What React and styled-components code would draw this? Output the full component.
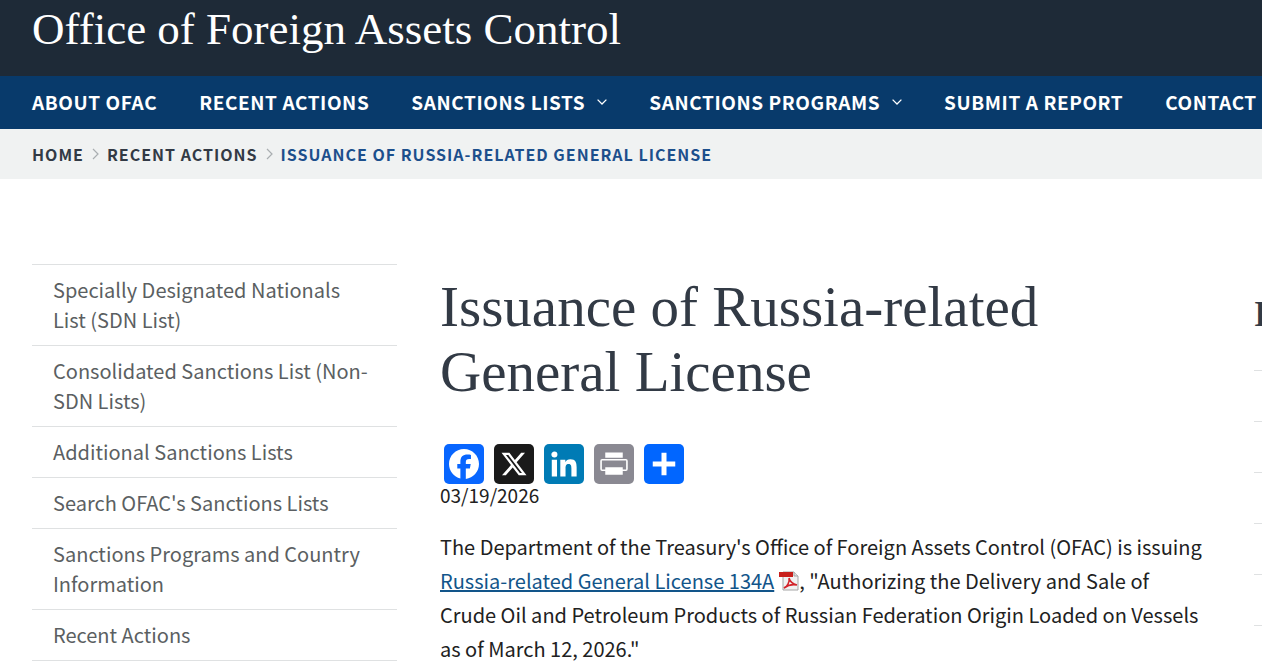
import React from 'react';
import styled, { createGlobalStyle } from 'styled-components';

const sans = '"Noto Sans CJK SC", "Open Sans", sans-serif';
const serif = '"Liberation Serif", "Times New Roman", serif';

const GlobalStyle = createGlobalStyle`
  *,
  *::before,
  *::after {
    box-sizing: border-box;
  }

  body {
    margin: 0;
    background: #fff;
    color: #212121;
    font-family: ${sans};
    font-size: 20px;
    overflow: hidden;
  }

  a {
    color: inherit;
    text-decoration: none;
  }

  ul,
  ol {
    margin: 0;
    padding: 0;
    list-style: none;
  }
`;

const Header = styled.header`
  height: 76px;
  padding: 4px 32px 0;
  background: #1e2a37;
  color: #fff;
`;

const SiteName = styled.a`
  display: block;
  font-family: ${serif};
  font-size: 45px;
  line-height: 50px;
`;

const Nav = styled.nav`
  background: #083a6b;
  color: #fff;
  overflow: hidden;
`;

const NavList = styled.ul`
  display: flex;
  gap: 42px;
  padding: 0 32px;
`;

const NavLink = styled.a`
  display: flex;
  align-items: center;
  gap: 12px;
  height: 53px;
  padding-bottom: 2px;
  font-size: 19px;
  font-weight: 700;
  letter-spacing: 0.03em;
  text-transform: uppercase;
  white-space: nowrap;
`;

const Crumbs = styled.ol`
  display: flex;
  align-items: center;
  gap: 8px;
  height: 50px;
  padding: 0 32px;
  background: #f0f2f2;
`;

const Crumb = styled.li`
  display: flex;
  align-items: center;
  gap: 8px;
  color: ${({ $current }) => ($current ? '#1c4f8c' : '#323a45')};
  font-size: 16px;
  font-weight: 700;
  letter-spacing: 1px;
  line-height: 24px;
  text-transform: uppercase;
  white-space: nowrap;
`;

const Main = styled.main`
  display: grid;
  grid-template-columns: 365px minmax(0, 1fr) 8px;
  gap: 43px;
  align-items: start;
  padding: 85px 0 0 32px;
`;

const SideList = styled.ul`
  border-top: 1px solid #dfe1e2;
`;

const SideItem = styled.li`
  border-bottom: 1px solid #dfe1e2;
`;

const SideLink = styled.a`
  display: block;
  padding: 10px 21px;
  color: #5b5f62;
  line-height: 30px;
`;

const Article = styled.article`
  padding: 10px 4px 0 0;
`;

const Title = styled.h1`
  margin: 0;
  color: #323a45;
  font-family: ${serif};
  font-size: 57px;
  font-weight: 400;
  line-height: 65px;
`;

const Share = styled.div`
  display: flex;
  gap: 10px;
  padding: 40px 4px 0;
`;

const ShareLink = styled.a`
  display: block;
  width: 40px;
  height: 40px;
  border-radius: 5px;
  background: ${({ $color }) => $color};

  svg {
    display: block;
    width: 100%;
    height: 100%;
  }
`;

const PostDate = styled.time`
  display: block;
  font-size: 19px;
  line-height: 22px;
`;

const Body = styled.p`
  margin: 24px 0 0;
  line-height: 34px;
`;

const DocLink = styled.a`
  color: #12558a;
  text-decoration: underline;
`;

const PdfIcon = styled.svg`
  width: 20px;
  height: 20px;
  margin-left: 5px;
  vertical-align: -2px;
`;

const Related = styled.aside`
  padding-top: 30px;
  overflow: hidden;
`;

const RelatedTitle = styled.h2`
  margin: 0;
  color: #323a45;
  font-family: ${serif};
  font-size: 35px;
  line-height: 42px;
`;

const RelatedRule = styled.li`
  height: 51px;
  border-top: 1px solid #dfe1e2;

  &:first-child {
    margin-top: 34px;
  }
`;

const navItems = [
  { label: 'About OFAC' },
  { label: 'Recent Actions' },
  { label: 'Sanctions Lists', menu: true },
  { label: 'Sanctions Programs', menu: true },
  { label: 'Submit a Report' },
  { label: 'Contact' },
];

const sideItems = [
  'Specially Designated Nationals List (SDN List)',
  'Consolidated Sanctions List (Non-SDN Lists)',
  'Additional Sanctions Lists',
  "Search OFAC's Sanctions Lists",
  'Sanctions Programs and Country Information',
  'Recent Actions',
];

const shareItems = [
  {
    name: 'Facebook',
    color: '#0866ff',
    path: 'M28 16c0-6.627-5.373-12-12-12S4 9.373 4 16c0 5.628 3.875 10.35 9.101 11.647v-7.98h-2.474V16H13.1v-1.58c0-4.085 1.849-5.978 5.859-5.978.76 0 2.072.15 2.608.298v3.325c-.283-.03-.775-.045-1.386-.045-1.967 0-2.728.745-2.728 2.683V16h3.92l-.673 3.667h-3.247v8.245C23.395 27.195 28 22.135 28 16',
  },
  {
    name: 'X',
    color: '#1a1a1a',
    path: 'M21.751 7h3.067l-6.7 7.658L26 25.078h-6.172l-4.833-6.32-5.531 6.32h-3.07l7.167-8.19L6 7h6.328l4.37 5.777zm-1.076 16.242h1.7L11.404 8.74H9.58z',
  },
  {
    name: 'LinkedIn',
    color: '#007bb5',
    path: 'M6.227 12.61h4.19v13.48h-4.19zm2.095-6.7a2.43 2.43 0 0 1 0 4.86c-1.344 0-2.428-1.09-2.428-2.43s1.084-2.43 2.428-2.43m4.72 6.7h4.02v1.84h.058c.56-1.058 1.927-2.176 3.965-2.176 4.238 0 5.02 2.792 5.02 6.42v7.395h-4.183v-6.56c0-1.564-.03-3.574-2.178-3.574-2.18 0-2.514 1.7-2.514 3.46v6.668h-4.187z',
  },
  {
    name: 'Print',
    color: '#8a8992',
    path: 'M9 6.800h14V11H9zM6.500 12h19A1.500 1.500 0 0 1 27 13.500v6.500a1.500 1.500 0 0 1-1.500 1.500H23V24.600H9V21.500H6.500A1.500 1.500 0 0 1 5 20v-6.500A1.500 1.500 0 0 1 6.500 12zM6.300 13.200v7.100H9V18.600h14v1.700h2.700v-7.100z',
  },
  {
    name: 'Share',
    color: '#0166ff',
    path: 'M14 7h4v7h7v4h-7v7h-4v-7H7v-4h7z',
  },
];

const ChevronDown = () => (
  <svg width="10" height="6" viewBox="0 0 10 6" fill="none" stroke="#fff" strokeWidth="1.3" aria-hidden="true">
    <path d="M.6.6 5 5 9.400.6" />
  </svg>
);

const ChevronRight = () => (
  <svg width="7" height="12" viewBox="0 0 7 12" fill="none" stroke="#a9aeb1" strokeWidth="1.2" aria-hidden="true">
    <path d="M1 1l5 5-5 5" />
  </svg>
);

const Pdf = () => (
  <PdfIcon viewBox="0 0 20 20" aria-label="PDF" role="img">
    <path d="M4 1h11l4 4v14H4z" fill="#f1f1f1" stroke="#a5a5a5" />
    <path d="M15 1v4h4" fill="#ddd" stroke="#a5a5a5" />
    <path d="M0 1h14v5H0z" fill="#c8201c" />
    <path
      d="M5 17c3-1 6-6 5-10 1 4 4 6 8 7-5-1-9 0-13 3z"
      fill="none"
      stroke="#d2232a"
      strokeWidth="1.6"
    />
  </PdfIcon>
);

const App = () => (
  <>
    <GlobalStyle />
    <Header>
      <SiteName href="#home">Office of Foreign Assets Control</SiteName>
    </Header>

    <Nav aria-label="Main">
      <NavList>
        {navItems.map(({ label, menu }) => (
          <li key={label}>
            <NavLink href="#nav">
              {label}
              {menu && <ChevronDown />}
            </NavLink>
          </li>
        ))}
      </NavList>
    </Nav>

    <nav aria-label="Breadcrumb">
      <Crumbs>
        <Crumb>
          <a href="#home">Home</a>
          <ChevronRight />
        </Crumb>
        <Crumb>
          <a href="#recent">Recent Actions</a>
          <ChevronRight />
        </Crumb>
        <Crumb $current aria-current="page">
          Issuance of Russia-related General License
        </Crumb>
      </Crumbs>
    </nav>

    <Main>
      <nav aria-label="Section">
        <SideList>
          {sideItems.map((item) => (
            <SideItem key={item}>
              <SideLink href="#section">{item}</SideLink>
            </SideItem>
          ))}
        </SideList>
      </nav>

      <Article>
        <Title>Issuance of Russia-related General License</Title>
        <Share>
          {shareItems.map(({ name, color, path }) => (
            <ShareLink key={name} href="#share" aria-label={name} $color={color}>
              <svg viewBox="0 0 32 32" fill="#fff" fillRule="evenodd" aria-hidden="true">
                <path d={path} />
              </svg>
            </ShareLink>
          ))}
        </Share>
        <PostDate dateTime="2026-03-19">03/19/2026</PostDate>
        <Body>
          The Department of the Treasury's Office of Foreign Assets Control (OFAC) is issuing{' '}
          <DocLink href="#license">Russia-related General License 134A</DocLink>
          <Pdf />, "Authorizing the Delivery and Sale of Crude Oil and Petroleum Products of Russian
          Federation Origin Loaded on Vessels as of March 12, 2026."
        </Body>
      </Article>

      <Related>
        <RelatedTitle>I</RelatedTitle>
        <ul>
          {[0, 1, 2, 3, 4, 5].map((row) => (
            <RelatedRule key={row} />
          ))}
        </ul>
      </Related>
    </Main>
  </>
);

export default App;
